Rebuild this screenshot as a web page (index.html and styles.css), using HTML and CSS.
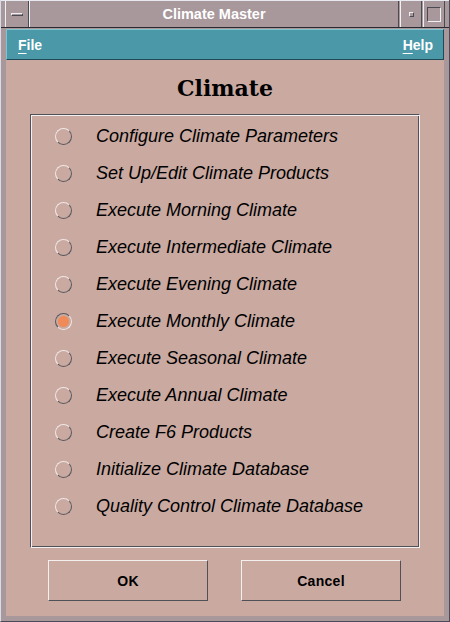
FILE: index.html
```html
<!DOCTYPE html>
<html>
<head>
<meta charset="utf-8">
<link rel="stylesheet" href="styles.css">
</head>
<body>
<div class="window">
  <div class="titlebar">
    <div class="tb-btn tb-menu"><span class="dash"></span></div>
    <div class="tb-title">Climate Master</div>
    <div class="tb-btn tb-min"><span class="dot"></span></div>
    <div class="tb-btn tb-max"><span class="sq"></span></div>
  </div>
  <div class="menubar">
    <span class="menu"><u>F</u>ile</span>
    <span class="menu"><u>H</u>elp</span>
  </div>
  <div class="content">
    <h1 class="heading">Climate</h1>
    <div class="box">
      <div class="row"><span class="radio"></span><span class="label">Configure Climate Parameters</span></div>
      <div class="row"><span class="radio"></span><span class="label">Set Up/Edit Climate Products</span></div>
      <div class="row"><span class="radio"></span><span class="label">Execute Morning Climate</span></div>
      <div class="row"><span class="radio"></span><span class="label">Execute Intermediate Climate</span></div>
      <div class="row"><span class="radio"></span><span class="label">Execute Evening Climate</span></div>
      <div class="row"><span class="radio on"></span><span class="label">Execute Monthly Climate</span></div>
      <div class="row"><span class="radio"></span><span class="label">Execute Seasonal Climate</span></div>
      <div class="row"><span class="radio"></span><span class="label">Execute Annual Climate</span></div>
      <div class="row"><span class="radio"></span><span class="label">Create F6 Products</span></div>
      <div class="row"><span class="radio"></span><span class="label">Initialize Climate Database</span></div>
      <div class="row"><span class="radio"></span><span class="label">Quality Control Climate Database</span></div>
    </div>
    <div class="buttons">
      <div class="btn">OK</div>
      <div class="btn">Cancel</div>
    </div>
  </div>
</div>
</body>
</html>
```
FILE: styles.css
```css
html, body {
  margin: 0;
  padding: 0;
  background: #a8989c;
}
.window {
  width: 450px;
  height: 622px;
  box-sizing: border-box;
  background: #a8989c;
  border: 1px solid #d8dce8;
  border-top: none;
  border-right-color: #4a4a58;
  border-bottom-color: #4a4a58;
  padding: 0 5px 5px 5px;
  display: flex;
  flex-direction: column;
  font-family: "Liberation Sans", Arial, sans-serif;
}
.titlebar {
  height: 28px;
  display: flex;
  margin: 0 -5px;
  padding: 0 4px;
  box-sizing: border-box;
  border-top: 1px solid #e8e8f0;
  border-bottom: 1px solid #2a2a30;
}
.tb-btn {
  width: 20px;
  display: flex;
  align-items: center;
  justify-content: center;
  border-left: 1px solid #f0f0f4;
  border-right: 1px solid #4a4a52;
}
.tb-menu { width: 22px; }
.dash {
  width: 12px;
  height: 3px;
  border: 1px solid #f0f0f4;
  border-right-color: #4a4a52;
  border-bottom-color: #4a4a52;
  box-sizing: border-box;
}
.dot {
  width: 3px;
  height: 3px;
  border: 1px solid #f0f0f4;
  border-right-color: #4a4a52;
  border-bottom-color: #4a4a52;
}
.sq {
  width: 12px;
  height: 13px;
  border: 1px solid #4a4a52;
  border-right-color: #f0f0f4;
  border-bottom-color: #f0f0f4;
}
.tb-title {
  flex: 1;
  text-align: center;
  color: #ffffff;
  font-weight: bold;
  font-size: 14.5px;
  line-height: 26px;
  border-left: 1px solid #f0f0f4;
  border-right: 1px solid #4a4a52;
}
.tb-min { margin-left: 1px; }
.tb-max { margin-left: 1px; }
.menubar {
  height: 31px;
  box-sizing: border-box;
  margin-top: 1px;
  background: #4a98a8;
  border: 1px solid #80c4d0;
  border-right-color: #1e4a58;
  border-bottom-color: #1e4a58;
  display: flex;
  justify-content: space-between;
  align-items: center;
  padding: 0 10px 0 11px;
}
.menu {
  color: #ffffff;
  font-weight: bold;
  font-size: 14px;
}
.menu u {
  text-decoration-thickness: 1px;
  text-underline-offset: 3px;
}
.content {
  flex: 1;
  background: #c9a9a0;
  display: flex;
  flex-direction: column;
}
.heading {
  margin: 13px 0 11px 0;
  line-height: 30px;
  text-align: center;
  font-family: "DejaVu Serif", "Liberation Serif", serif;
  font-weight: bold;
  font-size: 22px;
  color: #000;
}
.box {
  margin: 0 24px;
  height: 434px;
  box-sizing: border-box;
  border: 1px solid #505058;
  border-right-color: #f4f0f0;
  border-bottom-color: #f4f0f0;
  box-shadow: inset 1px 1px 0 #f4f0f0, inset -1px -1px 0 #505058;
  padding: 3px 0 0 24px;
}
.row {
  height: 37px;
  display: flex;
  align-items: center;
}
.radio {
  width: 17px;
  height: 17px;
  box-sizing: border-box;
  border-radius: 50%;
  border: 1px solid;
  border-color: #f0e8e8 #58585e #58585e #f0e8e8;
  margin-right: 24px;
  flex: none;
}
.radio.on {
  border-color: #58585e #f0e8e8 #f0e8e8 #58585e;
  background: radial-gradient(circle, #f08a58 0 5px, #c9a9a0 6px);
}
.label {
  font-style: italic;
  font-size: 18px;
  color: #000;
}
.buttons {
  display: flex;
  gap: 33px;
  margin: 12px 0 0 42px;
}
.btn {
  width: 160px;
  height: 41px;
  box-sizing: border-box;
  border: 1px solid #f4f0f0;
  border-right-color: #505058;
  border-bottom-color: #505058;
  display: flex;
  align-items: center;
  justify-content: center;
  font-weight: bold;
  font-size: 14px;
  letter-spacing: 0.3px;
  color: #000;
}
```
